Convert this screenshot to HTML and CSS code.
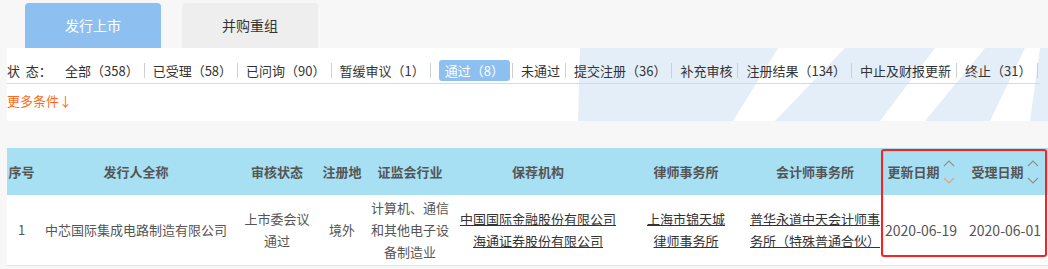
FILE: index.html
```html
<!DOCTYPE html>
<html lang="zh-CN">
<head>
  <meta charset="UTF-8">
  <title>发行上市</title>
  <link rel="stylesheet" href="styles.css">
</head>
<body>
  <div class="tabs">
    <div class="tab active">发行上市</div>
    <div class="tab">并购重组</div>
  </div>

  <div class="panel">
    <svg class="watermark" width="1041" height="73" viewBox="0 0 1041 73">
      <polygon points="573,0 771,0 726,73 571,73"/>
      <polygon points="838,0 928,0 873,73 768,73"/>
      <polygon points="978,0 1018,0 983,73 918,73"/>
      <polygon points="1033,0 1041,0 1041,73 1023,73"/>
    </svg>
    <div class="status">
      <span class="label">状&nbsp;&nbsp;态：</span>
      <span class="item">全部（358）</span><span class="sep"></span>
      <span class="item">已受理（58）</span><span class="sep"></span>
      <span class="item">已问询（90）</span><span class="sep"></span>
      <span class="item">暂缓审议（1）</span><span class="sep"></span>
      <span class="item on">通过（8）</span><span class="sep"></span>
      <span class="item">未通过</span><span class="sep"></span>
      <span class="item">提交注册（36）</span><span class="sep"></span>
      <span class="item">补充审核</span><span class="sep"></span>
      <span class="item">注册结果（134）</span><span class="sep"></span>
      <span class="item">中止及财报更新</span><span class="sep"></span>
      <span class="item">终止（31）</span><span class="sep"></span>
    </div>
    <div class="more">更多条件↓</div>
  </div>

  <div class="table-wrap">
    <table>
      <colgroup>
        <col style="width:29px"><col style="width:200px"><col style="width:82px"><col style="width:48px">
        <col style="width:88px"><col style="width:168px"><col style="width:128px"><col style="width:130px">
        <col style="width:82px"><col style="width:86px">
      </colgroup>
      <tr>
        <th>序号</th>
        <th>发行人全称</th>
        <th>审核状态</th>
        <th>注册地</th>
        <th>证监会行业</th>
        <th>保荐机构</th>
        <th>律师事务所</th>
        <th>会计师事务所</th>
        <th><span class="sort">更新日期<svg width="12" height="26" viewBox="0 0 12 26"><path d="M1 7 L6 2 L11 7" class="up"/><path d="M1 19 L6 24 L11 19" class="down hot"/></svg></span></th>
        <th><span class="sort">受理日期<svg width="12" height="26" viewBox="0 0 12 26"><path d="M1 7 L6 2 L11 7" class="up"/><path d="M1 19 L6 24 L11 19" class="down"/></svg></span></th>
      </tr>
      <tr>
        <td>1</td>
        <td>中芯国际集成电路制造有限公司</td>
        <td class="pad8">上市委会议通过</td>
        <td>境外</td>
        <td class="pad5">计算机、通信和其他电子设备制造业</td>
        <td><a href="#">中国国际金融股份有限公司</a><br><a href="#">海通证券股份有限公司</a></td>
        <td class="pad24"><a href="#">上海市锦天城律师事务所</a></td>
        <td class="left"><a href="#">普华永道中天会计师事务所（特殊普通合伙）</a></td>
        <td class="date">2020-06-19</td>
        <td class="date">2020-06-01</td>
      </tr>
    </table>
    <div class="mark"></div>
  </div>
</body>
</html>
```

FILE: styles.css
```css
body { margin: 0; background: #f7f7f7; font-family: "Noto Sans CJK SC", "Liberation Sans", sans-serif; font-size: 13px; color: #333; }

.tabs { display: flex; gap: 21px; padding: 3px 0 0 25px; height: 45px; }
.tab { width: 136px; height: 45px; line-height: 45px; text-align: center; font-size: 14px; background: #eeeeee; color: #333; border-radius: 4px 4px 0 0; }
.tab.active { background: #8dbff0; color: #fff; }

.panel { position: relative; margin-left: 7px; height: 73px; background: #fff; overflow: hidden; }
.watermark { position: absolute; left: 0; top: 0; fill: #e4eef8; }
.status { position: relative; display: flex; align-items: center; margin-right: 8px; padding: 12px 0 2px; line-height: 21px; border-bottom: 1px solid #d9d9d9; white-space: nowrap; }
.status > span { flex-shrink: 0; }
.label { width: 58px; }
.item { color: #333; }
.item.on { background: #8dbff0; color: #fff; border-radius: 3px; padding: 0 6px; margin-right: -3px; }
.sep { width: 1px; height: 15px; background: #cfcfcf; margin: 0 8px 0 5px; }
.more { position: relative; margin-top: 6px; line-height: 21px; color: #ff6a1a; }

.table-wrap { position: relative; margin: 27px 0 0 7px; }
table { border-collapse: collapse; table-layout: fixed; width: 1041px; background: #fff; }
th { height: 47px; padding: 0; background: #a7dff3; color: #555; font-weight: 700; text-align: center; white-space: nowrap; }
td { height: 70px; padding: 0; text-align: center; color: #555; line-height: 22px; border-bottom: 1px solid #e3e3e3; }
td a { color: #333; text-decoration: underline; }
td.pad8 { padding: 0 8px; }
td.pad5 { padding: 0 5px; }
td.pad24 { padding: 0 24px; }
td.left { text-align: left; }
td.date { font-size: 14px; white-space: nowrap; }

.sort { display: inline-flex; align-items: center; gap: 3px; }
.sort path { fill: none; stroke: #8f8f8f; stroke-width: 1.1; }
.sort path.hot { stroke: #ef9a80; }

.mark { position: absolute; left: 874px; top: 1px; width: 162px; height: 104px; border: 2px solid #ff1f1f; border-radius: 3px; }
```
